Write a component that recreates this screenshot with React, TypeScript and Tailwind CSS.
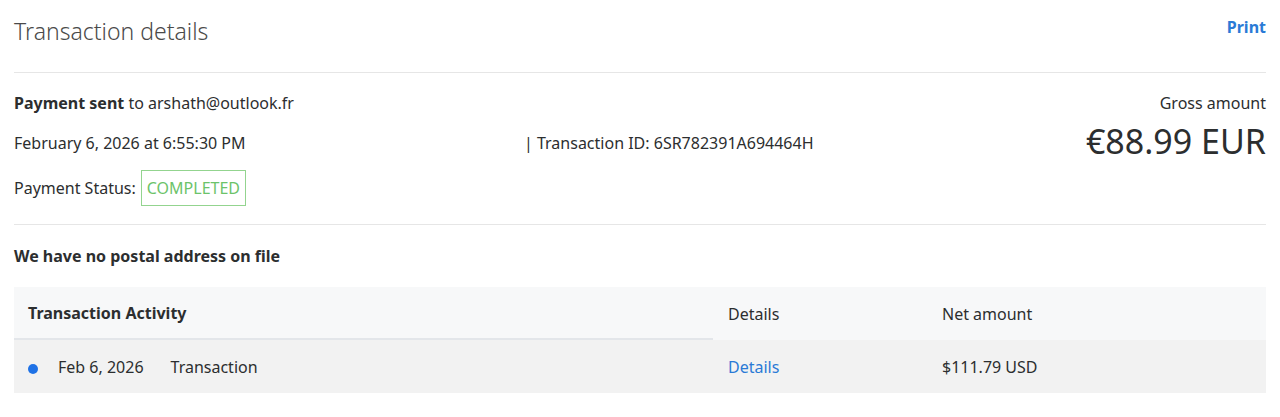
export default function App() {
  return (
    <div className="bg-white w-[1280px] h-[417px] overflow-hidden text-[#2c2e2f]" style={{ fontFamily: '"Noto Sans", sans-serif' }}>
      <div className="px-[14px]">
        <div className="flex justify-between items-start h-[73px] border-b border-[#e6e6e6]">
          <h1 className="text-[23px] font-light text-[#4a4a4a] mt-[14px] leading-[34px]">Transaction details</h1>
          <a className="text-[16px] font-bold text-[#2a7ad6] mt-[16px] leading-[22px]">Print</a>
        </div>
        <div className="flex justify-between h-[152px] border-b border-[#e6e6e6]">
          <div className="flex flex-col text-[16px]">
            <div className="mt-[19px] leading-[22px]"><span className="font-bold">Payment sent</span> to arshath@outlook.fr</div>
            <div className="mt-[18px] leading-[22px] flex">
              <span className="w-[510px]">February 6, 2026 at 6:55:30 PM</span>
              <span>| Transaction ID: 6SR782391A694464H</span>
            </div>
            <div className="mt-[16px] flex items-center">
              <span className="leading-[22px]">Payment Status:</span>
              <span className="ml-[5px] border border-[#93d48f] text-[#6cc36a] px-[5px] h-[36px] flex items-center">COMPLETED</span>
            </div>
          </div>
          <div className="flex flex-col items-end">
            <div className="mt-[19px] text-[16px] leading-[22px]">Gross amount</div>
            <div className="mt-[6px] text-[34px] leading-[42px] font-normal">€88.99 EUR</div>
          </div>
        </div>
        <div className="mt-[20px] text-[16px] font-bold leading-[22px]">We have no postal address on file</div>
        <div className="mt-[20px] text-[16px]">
          <div className="flex h-[53px] bg-[#f7f8f9] items-center">
            <div className="w-[699px] h-full flex items-center pl-[14px] font-bold border-b-2 border-[#e3e6ea]">Transaction Activity</div>
            <div className="w-[229px] pl-[15px]">Details</div>
            <div>Net amount</div>
          </div>
          <div className="flex h-[53px] bg-[#f2f2f2] items-center">
            <div className="w-[699px] flex items-center pl-[14px]">
              <span className="w-[10px] h-[10px] rounded-full bg-[#1f72e6] mt-[4px]" />
              <span className="ml-[20px]">Feb 6, 2026</span>
              <span className="ml-[27px]">Transaction</span>
            </div>
            <div className="w-[229px] pl-[15px] text-[#2a7ad6]">Details</div>
            <div>$111.79 USD</div>
          </div>
        </div>
      </div>
    </div>
  );
}
